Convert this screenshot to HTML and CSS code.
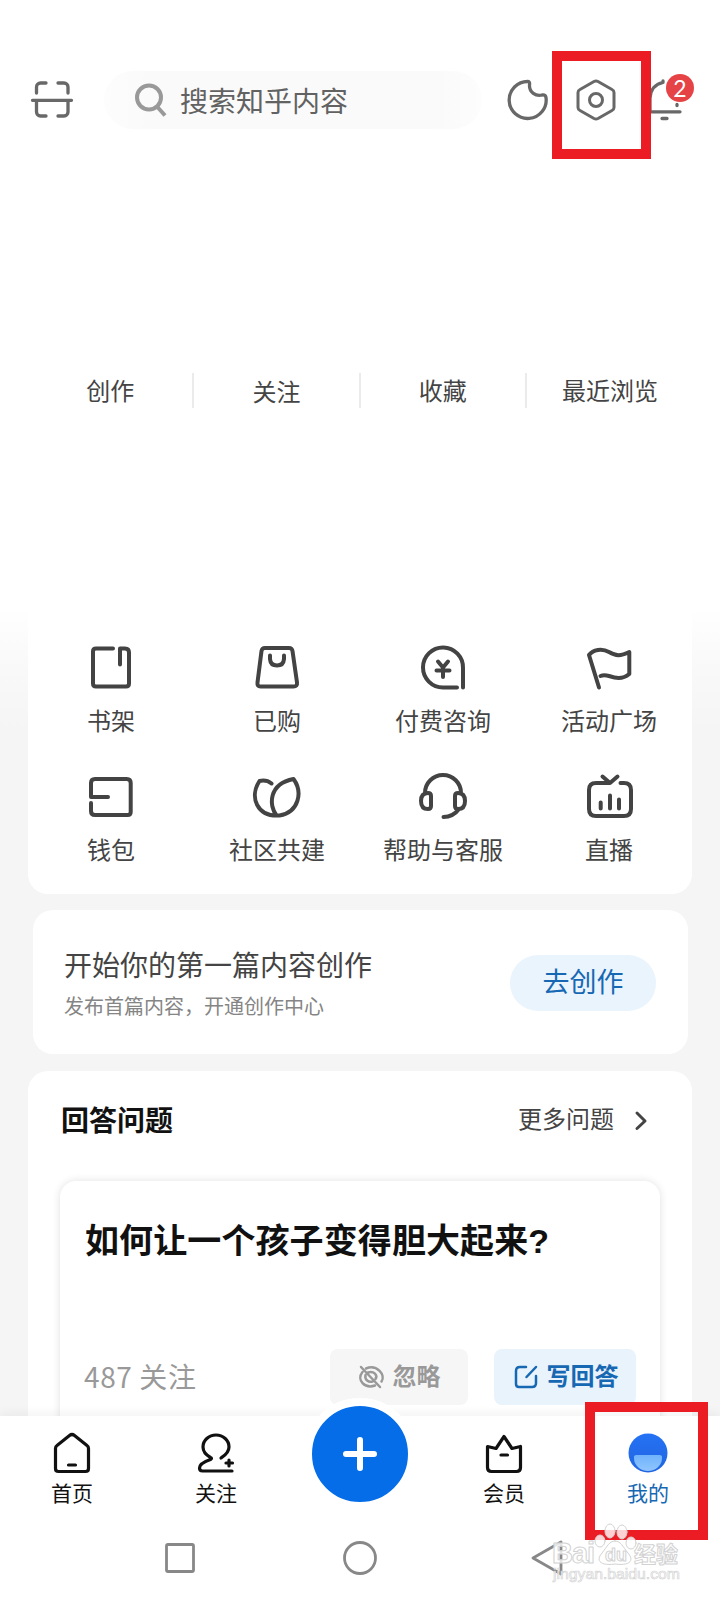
FILE: index.html
```html
<!DOCTYPE html>
<html lang="zh-CN">
<head>
<meta charset="utf-8">
<title>我的</title>
<link rel="stylesheet" href="styles.css">
</head>
<body>
<div class="screen">
  <header class="topbar">
    <svg class="scan" width="44" height="44" viewBox="0 0 44 44"><path d="M6.500 15V9a4 4 0 0 1 4-4H16M28 5h6a4 4 0 0 1 4 4v6M6.500 24v10a4 4 0 0 0 4 4H16M28 38h6a4 4 0 0 0 4-4V24M2.500 22.300h39"/></svg>
    <div class="search">
      <svg width="34" height="36" viewBox="0 0 34 36"><circle cx="15" cy="15.500" r="12"/><path d="M23 24.500l8 9"/></svg>
      <span>搜索知乎内容</span>
    </div>
    <svg class="moon" width="44" height="44" viewBox="0 0 44 44"><path d="M22 3.500a18.500 18.500 0 1 0 18 16q-.5-3-4-2.500C30 18.500 23 14.500 23.500 7Q24 3.500 22 3.500z"/></svg>
    <svg class="gear" width="42" height="44" viewBox="0 0 42 44"><path d="M19 3.500q2-1 4 0L37 11.500q2 1 2 3v15q0 2-2 3L23 40.500q-2 1-4 0L5 32.500q-2-1-2-3v-15q0-2 2-3z"/><circle cx="21" cy="22" r="6.500"/></svg>
    <div class="bell">
      <svg width="44" height="44" viewBox="0 0 44 44"><path d="M1 34V20Q2 7 14 4.500V3M1 33.800h30M28 27.500v-1M13 40.500h5"/></svg>
      <span class="badge">2</span>
    </div>
  </header>

  <nav class="stats">
    <span>创作</span><span class="low">关注</span><span>收藏</span><span>最近浏览</span>
  </nav>

  <main class="content">
    <section class="tools">
      <div class="tool"><svg viewBox="0 0 48 48"><path d="M26 4H9Q6 4 6 7v32q0 3 3 3h30q3 0 3-3V8q0-4-4-4h-5v16" transform="translate(0 .5)"/></svg><span>书架</span></div>
      <div class="tool"><svg viewBox="0 0 48 48"><path d="M12 4h24q3 0 3.500 3l4.500 31.500q.5 4-3.500 4h-33q-3.500 0-3-4L8.500 7Q9 4 12 4zM17 11.500V15q.5 6.500 7 6.500t7-6.500v-3.500"/></svg><span>已购</span></div>
      <div class="tool"><svg viewBox="0 0 48 48"><path d="M38 43.500H24A20 20 0 1 1 44 24V43.500M19 17.500l5 6 5-6M17.500 26.500h13M24 24v9"/></svg><span>付费咨询</span></div>
      <div class="tool"><svg viewBox="0 0 48 48"><path d="M14 43.500L4 11C8 5.500 17 4 24 8s11 4.500 20.300 0V30C37 36 30 34 24 32q-5-1.500-8.500 0"/></svg><span>活动广场</span></div>
      <div class="tool"><svg viewBox="0 0 48 48"><path d="M21 24H4V10q0-4 4-4h31.700q4 0 4 4v29q0 3-3 3H8q-4 0-4-4v-8"/></svg><span>钱包</span></div>
      <div class="tool"><svg viewBox="0 0 48 48"><path d="M23.500 42.500C16 33 15 11 40.500 6c9.500 13 5.500 33-14 36.500C4 44 -4 24 6.500 8q7-1.500 12 2.500"/></svg><span>社区共建</span></div>
      <div class="tool"><svg viewBox="0 0 48 48"><path d="M6 20a18 18 0 0 1 36 0M40 36Q34 44 24.500 44M12 23q0-3-3-3-7 0-7 8t7 8q3 0 3-3zM36 23q0-3 3-3 7 0 7 8t-7 8q-3 0-3-3z"/></svg><span>帮助与客服</span></div>
      <div class="tool"><svg viewBox="0 0 48 48"><path d="M35.500 10H39q7 0 7 7v19q0 7-7 7H11q-7 0-7-7V17q0-7 7-7h14l7.500-6.500M17.500 3.500L25 10M15.700 29.500v6M25 22.500v13M34 26.500v9"/></svg><span>直播</span></div>
    </section>

    <section class="create">
      <div class="create-text">
        <h2>开始你的第一篇内容创作</h2>
        <p>发布首篇内容，开通创作中心</p>
      </div>
      <button class="create-btn">去创作</button>
    </section>

    <section class="answers">
      <div class="answers-head">
        <h2>回答问题</h2>
        <span class="more">更多问题</span>
        <svg width="14" height="20" viewBox="0 0 14 20"><path d="M3 3l8 8-8 7.500"/></svg>
      </div>
      <article class="question">
        <h3>如何让一个孩子变得胆大起来?</h3>
        <div class="question-foot">
          <span class="followers">487 关注</span>
          <button class="ignore"><svg width="26" height="24" viewBox="0 0 26 24"><path d="M3 2l19 20M8 3.500C19-1 28 10 23.500 16.500M4.500 7C-2 15 7 24 17 20.500M10 7.500c6-2 10 3 7.500 6.500M7.500 10c-1 5 3 7.500 7 6.500"/></svg>忽略</button>
          <button class="write"><svg width="24" height="24" viewBox="0 0 24 24"><path d="M12 2H6Q2 2 2 6v13q0 3 3 3h13q4 0 4-4v-7M12.500 12L22 2"/></svg>写回答</button>
        </div>
      </article>
    </section>
  </main>

  <nav class="tabs">
    <div class="tab"><svg viewBox="0 0 44 44"><path d="M5.500 17.500q0-2 1.500-3L19.500 4.500q2.500-2 5 0L37 14.500q1.500 1 1.500 3V37.500q0 3-3 3h-27q-3 0-3-3zM18.500 34h7"/></svg><span>首页</span></div>
    <div class="tab"><svg viewBox="0 0 44 44"><path d="M27 27c3-2 8-5 8-11A13 12 0 0 0 9 16c0 6 4 8.500 7.500 10.500q2 1 0 2C9 31 5.500 34 5.500 37q0 3 3 3h29.500M35 29v6M32 32h6.500"/></svg><span>关注</span></div>
    <div class="fab"><svg width="36" height="36" viewBox="0 0 36 36"><path d="M18 4v28M4 18h28"/></svg></div>
    <div class="tab"><svg viewBox="0 0 44 44"><path d="M5.500 15.500l8.500 2L22 5.500l8 12 8.500-2V36.500q0 4-4 4h-25q-4 0-4-4zM19 24h6.500"/></svg><span>会员</span></div>
    <div class="tab active"><svg viewBox="0 0 44 44"><defs><linearGradient id="face" x2="0" y2="1"><stop stop-color="#2472f5"/><stop offset="1" stop-color="#2265df"/></linearGradient><linearGradient id="smile" x2="0" y2="1"><stop stop-color="#70b3fb"/><stop offset="1" stop-color="#8fc5ff"/></linearGradient></defs><circle cx="22" cy="22" r="19.500" fill="url(#face)"/><path d="M10.500 24h23q3 0 2.500 3a14 13 0 0 1-28 0q-.5-3 2.500-3z" fill="url(#smile)"/></svg><span>我的</span></div>
  </nav>

  <footer class="sysnav">
    <svg viewBox="0 0 40 40"><rect x="6.500" y="6.500" width="27" height="27" rx="1.500"/></svg>
    <svg viewBox="0 0 40 40"><circle cx="20" cy="20" r="15.500"/></svg>
    <svg class="back" viewBox="0 0 40 40"><path d="M5 20L33 4v32z"/></svg>
  </footer>

  <div class="mark mark-settings"></div>
  <div class="mark mark-mine"></div>

  <svg class="watermark" width="140" height="70" viewBox="0 0 140 70">
    <g class="wm">
      <text class="wm-brand" x="4" y="42" textLength="43">Bai</text>
      <ellipse cx="52" cy="20" rx="5" ry="6"/><ellipse cx="62" cy="10" rx="5" ry="7"/><ellipse cx="74" cy="11" rx="5" ry="7"/><ellipse cx="83" cy="22" rx="5" ry="6"/>
      <path d="M67 20c6 0 8 6 13 12 7 8 1 13-13 11-14 2-20-3-13-11 5-6 7-12 13-12z"/>
      <text class="wm-du" x="57" y="40">du</text>
      <text class="wm-cn" x="86" y="41">经验</text>
      <text class="wm-url" x="5" y="58" textLength="127" lengthAdjust="spacingAndGlyphs">jingyan.baidu.com</text>
    </g>
  </svg>
</div>
</body>
</html>
```
FILE: styles.css
```css
* { box-sizing: border-box; }
body, h2, h3, p { margin: 0; }
body {
  font-family: "Liberation Sans", "Noto Sans CJK SC", sans-serif;
  background: #fff;
}
button { border: 0; font: inherit; padding: 0; }
svg { display: block; flex: none; fill: none; overflow: visible; stroke-linecap: round; stroke-linejoin: round; }

.screen {
  position: relative;
  display: flex;
  flex-direction: column;
  width: 720px;
  height: 1600px;
  overflow: hidden;
  background: linear-gradient(#fff 608px, #fafafa 655px, #f5f5f5 730px);
}

/* top bar */
.topbar {
  display: flex;
  align-items: center;
  height: 60px;
  margin-top: 70px;
  padding-left: 30px;
  stroke: #686868;
  stroke-width: 3.300;
}
.search {
  display: flex;
  align-items: center;
  gap: 12px;
  width: 378px;
  height: 58px;
  margin: 0 24px 0 30px;
  padding-left: 30px;
  border-radius: 29px;
  background: linear-gradient(90deg, #fdfdfd, #fafafa 12%, #fafafa 88%, #fdfdfd);
  color: #626262;
  font-size: 28px;
  line-height: 58px;
}
.search svg { stroke: #999; stroke-width: 4; stroke-linecap: butt; }
.search span { padding-top: 5px; }
.gear { margin-left: 25px; stroke-width: 3; }
.bell { position: relative; margin-left: 32px; }
.badge {
  position: absolute;
  left: 17px;
  top: -4px;
  width: 28px;
  height: 28px;
  border-radius: 50%;
  background: #e54345;
  color: #fff;
  font: 23px/28px Lato, sans-serif;
  text-align: center;
}

/* counters */
.stats {
  display: grid;
  grid-template-columns: repeat(4, 166.300px);
  height: 36px;
  margin: 243px 0 0 28px;
}
.stats span {
  height: 35px;
  border-right: 2px solid #ebebeb;
  color: #444;
  font-size: 24px;
  line-height: 37px;
  text-align: center;
}
.stats span:last-child { border: 0; }
.stats .low { line-height: 40px; }

.content { flex: 1; min-height: 0; margin-top: 191px; padding: 0 28px; overflow: hidden; }

/* shortcuts */
.tools {
  display: grid;
  grid-template-columns: repeat(4, 166px);
  grid-auto-rows: 129px;
  height: 294px;
  padding-top: 44px;
  border-radius: 20px;
  background: #fff;
}
.tool { display: flex; flex-direction: column; align-items: center; gap: 12px; }
.tool svg { width: 48px; height: 48px; stroke: #434343; stroke-width: 4; }
.tool span { color: #444; font-size: 24px; line-height: 36px; }

/* creation prompt */
.create {
  display: flex;
  justify-content: space-between;
  align-items: center;
  height: 144px;
  margin: 16px 4px 17px 5px;
  padding: 0 32px 0 31px;
  border-radius: 20px;
  background: #fff;
}
.create-text { padding-top: 9px; }
.create h2 { color: #444; font-size: 28px; font-weight: 400; line-height: 42px; }
.create p { color: #858585; font-size: 20px; line-height: 39px; }
.create-btn {
  width: 146px;
  height: 56px;
  margin-top: 2px;
  border-radius: 28px;
  background: #e9f4fd;
  color: #1768b3;
  font-size: 27px;
  line-height: 56px;
}

/* questions */
.answers { height: 380px; padding: 28px 32px 0; border-radius: 20px 20px 0 0; background: #fff; }
.answers-head { display: flex; align-items: center; height: 42px; padding: 0 12px 0 1px; }
.answers h2 { flex: 1; padding-top: 3px; color: #111; font-size: 28px; line-height: 42px; }
.more { margin-right: 20px; color: #444; font-size: 24px; line-height: 42px; }
.answers-head svg { stroke: #444; stroke-width: 3; }
.question {
  height: 260px;
  margin-top: 40px;
  padding: 35px 24px 0 25px;
  border-radius: 16px;
  box-shadow: 0 0 8px rgba(0, 0, 0, .12);
  background: #fff;
}
.question h3 { color: #111; font-size: 34px; line-height: 50px; letter-spacing: .1px; }
.question-foot { display: flex; margin-top: 83px; height: 56px; }
.followers { flex: 1; margin-left: -1px; color: #999; font-size: 28px; line-height: 54px; letter-spacing: .6px; font-family: "Noto Sans CJK SC", sans-serif; }
.question-foot button {
  display: flex;
  align-items: center;
  justify-content: center;
  gap: 9px;
  border-radius: 8px;
  font-size: 24px;
  font-weight: 700;
  line-height: 52px;
}
.question-foot svg { stroke: currentColor; stroke-width: 2.500; }
.ignore { width: 138px; margin-right: 26px; background: #f6f6f6; color: #999; }
.write { width: 142px; padding-left: 2px; background: #e9f3fc; color: #1768b3; }

/* bottom tabs */
.tabs {
  position: relative;
  display: grid;
  grid-template-columns: repeat(5, 144px);
  height: 104px;
  padding-top: 15px;
  background: #fff;
  box-shadow: 0 -3px 10px rgba(0, 0, 0, .05);
}
.tab { display: flex; flex-direction: column; align-items: center; gap: 3px; }
.tab svg { width: 44px; height: 44px; stroke: #111; stroke-width: 3.200; }
.tab span { color: #111; font-size: 21px; line-height: 32px; }
.tab.active svg { stroke: none; }
.tab.active span { color: #1768b3; }
.fab {
  display: flex;
  align-items: center;
  justify-content: center;
  justify-self: center;
  width: 112px;
  height: 112px;
  margin-top: -33px;
  border: 8px solid #fff;
  border-radius: 50%;
  background: #056de8;
}
.fab svg { stroke: #fff; stroke-width: 6; }

/* system navigation */
.sysnav {
  position: relative;
  display: flex;
  gap: 140px;
  align-items: center;
  height: 80px;
  padding: 0 0 4px 160px;
  background: #fff;
}
.sysnav svg { width: 40px; height: 40px; stroke: #888; stroke-width: 2.800; }
.sysnav .back { margin-left: 8px; }

/* highlight frames and watermark lie over the screen */
.mark { position: absolute; border: 10px solid #eb1c24; }
.mark-settings { left: 552px; top: 51px; width: 99px; height: 108px; }
.mark-mine { left: 585px; top: 1402px; width: 123px; height: 138px; }
.watermark { position: absolute; left: 548px; top: 1521px; }
.wm { fill: #fff; fill-opacity: .8; stroke: #d2d2d2; stroke-width: 1; }
.wm-brand { font: bold 29px "Liberation Sans", sans-serif; }
.wm-du { font: bold 18px "Liberation Sans", sans-serif; }
.wm-cn { font: bold 22px "Noto Sans CJK SC", sans-serif; }
.wm-url { font: 14px "Liberation Sans", sans-serif; stroke-width: .6; }
```
